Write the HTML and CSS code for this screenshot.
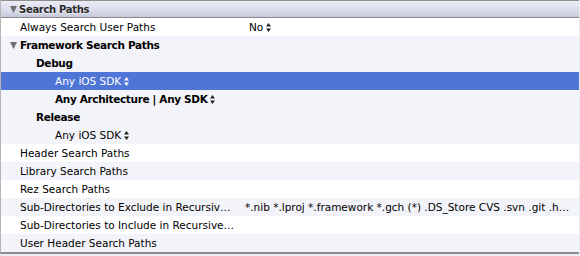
FILE: index.html
```html
<!DOCTYPE html>
<html lang="en">
<head>
    <meta charset="UTF-8">
    <title>Search Paths</title>
    <link rel="stylesheet" href="styles.css">
</head>
<body>
    <div class="settings">
        <div class="section-header">
            <span class="disclosure"><svg width="7" height="7" viewBox="0 0 7 7"><path d="M0 0 H7 L3.5 7 Z" fill="#6e6e6e"/></svg></span>
            <span class="section-title">Search Paths</span>
        </div>

        <div class="row">
            <div class="name">Always Search User Paths</div>
            <div class="value">No <span class="stepper"><svg width="5" height="9" viewBox="0 0 5 9"><path d="M0 3.5 L2.5 0 L5 3.5 Z M0 5.5 L5 5.5 L2.5 9 Z" fill="#222"/></svg></span></div>
        </div>

        <div class="row alt">
            <div class="name bold"><span class="disclosure small"><svg width="7" height="7" viewBox="0 0 7 7"><path d="M0 0 H7 L3.5 7 Z" fill="#6e6e6e"/></svg></span>Framework Search Paths</div>
        </div>
        <div class="row alt">
            <div class="name bold level-1">Debug</div>
        </div>
        <div class="row selected">
            <div class="name level-2">Any iOS SDK <span class="stepper"><svg width="5" height="9" viewBox="0 0 5 9"><path d="M0 3.5 L2.5 0 L5 3.5 Z M0 5.5 L5 5.5 L2.5 9 Z" fill="#fff"/></svg></span></div>
        </div>
        <div class="row alt">
            <div class="name bold level-2">Any Architecture | Any SDK <span class="stepper"><svg width="5" height="9" viewBox="0 0 5 9"><path d="M0 3.5 L2.5 0 L5 3.5 Z M0 5.5 L5 5.5 L2.5 9 Z" fill="#222"/></svg></span></div>
        </div>
        <div class="row alt">
            <div class="name bold level-1">Release</div>
        </div>
        <div class="row alt">
            <div class="name level-2">Any iOS SDK <span class="stepper"><svg width="5" height="9" viewBox="0 0 5 9"><path d="M0 3.5 L2.5 0 L5 3.5 Z M0 5.5 L5 5.5 L2.5 9 Z" fill="#222"/></svg></span></div>
        </div>

        <div class="row">
            <div class="name">Header Search Paths</div>
        </div>
        <div class="row alt">
            <div class="name">Library Search Paths</div>
        </div>
        <div class="row">
            <div class="name">Rez Search Paths</div>
        </div>
        <div class="row alt">
            <div class="name">Sub-Directories to Exclude in Recursiv…</div>
            <div class="value wide">*.nib *.lproj *.framework *.gch (*) .DS_Store CVS .svn .git .h…</div>
        </div>
        <div class="row">
            <div class="name">Sub-Directories to Include in Recursive…</div>
        </div>
        <div class="row alt">
            <div class="name">User Header Search Paths</div>
        </div>
    </div>
</body>
</html>
```

FILE: styles.css
```css
body {
    margin: 0;
    padding: 0;
    background: #eceef5;
    font-family: 'Lucida Grande', 'DejaVu Sans', sans-serif;
    font-size: 10.5px;
    color: #000;
}

.settings {
    width: 578px;
    border-left: 1px solid #b4b4b4;
    border-bottom: 2px solid #8c8c8c;
    background: #fff;
}

.section-header {
    display: flex;
    align-items: center;
    height: 16px;
    border-top: 1px solid #8e8e8e;
    border-bottom: 1px solid #8a8a8a;
    background: linear-gradient(to bottom, #ebecf6, #dadbeb 60%, #c6c7da);
}

.section-header .disclosure {
    display: flex;
    margin: 0 2px 0 9px;
}

.section-title {
    font-weight: bold;
    font-size: 10px;
    letter-spacing: -0.3px;
    color: #2a2a2a;
    text-shadow: 0 1px 0 rgba(255, 255, 255, 0.6);
}

.row {
    display: flex;
    align-items: center;
    height: 18px;
    background: #fff;
}

.row.alt {
    background: #f3f4f9;
}

.row.selected {
    background: #4f75d7;
    color: #fff;
}

.name {
    box-sizing: border-box;
    display: flex;
    align-items: center;
    width: 244px;
    padding-left: 19px;
    white-space: nowrap;
    flex-shrink: 0;
}

.name.bold {
    font-weight: bold;
    letter-spacing: -0.35px;
}

.name.level-1 {
    padding-left: 35px;
}

.name.level-2 {
    padding-left: 54px;
}

.disclosure.small {
    display: flex;
    margin-left: -10px;
    margin-right: 3px;
}

.value {
    display: flex;
    align-items: center;
    padding-left: 4px;
    white-space: nowrap;
}

.value.wide {
    display: block;
    flex: 1;
    min-width: 0;
    padding-left: 0;
    line-height: 18px;
    overflow: hidden;
}

.stepper {
    display: inline-flex;
    margin-left: 3px;
}
```
